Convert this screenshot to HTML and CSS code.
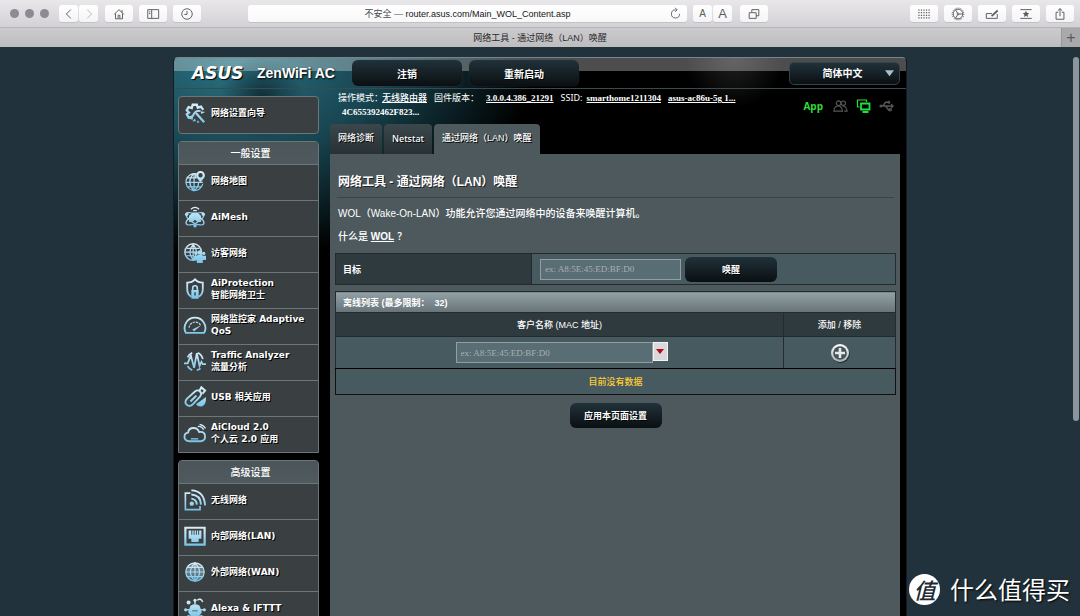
FILE: index.html
```
<!DOCTYPE html>
<html lang="zh-CN">
<head>
<meta charset="utf-8">
<title>网络工具 - 通过网络（LAN）唤醒</title>
<link rel="stylesheet" href="styles.css">
</head>
<body>
<svg class="defs" width="0" height="0" aria-hidden="true">
  <defs>
    <linearGradient id="ice" gradientUnits="userSpaceOnUse" x1="0" y1="0" x2="0" y2="24"><stop offset="0" stop-color="#e4f4fb"/><stop offset="1" stop-color="#6fc0e6"/></linearGradient>
    <linearGradient id="metal" x1="0" y1="0" x2="0" y2="1"><stop offset="0" stop-color="#ffffff"/><stop offset="1" stop-color="#a9adaf"/></linearGradient>
  </defs>
</svg>
<div class="browser">
  <header class="toolbar">
    <div class="lights"><i></i><i></i><i></i></div>
    <div class="pair">
      <button class="tool" aria-label="后退"><svg viewBox="0 0 16 16"><path d="M10 3 5 8l5 5"/></svg></button>
      <button class="tool off" aria-label="前进"><svg viewBox="0 0 16 16"><path d="m6 3 5 5-5 5"/></svg></button>
    </div>
    <div class="tools">
      <button class="tool wide" aria-label="主页"><svg viewBox="0 0 16 16"><path d="M2.500 8.500 8 3l5.500 5.500M4 7.500v6h8v-6M11.500 6.500V3.500M7 13v-3.500h2V13"/></svg></button>
      <button class="tool wide" aria-label="边栏"><svg viewBox="0 0 16 16"><path d="M2 3h12.500v10H2zM6.500 3v10M3.500 5.500h1.500M3.500 7.500h1.500"/></svg></button>
      <button class="tool wide" aria-label="历史记录"><svg viewBox="0 0 16 16"><circle cx="8" cy="8" r="6"/><path d="M8 4.500V8.500H5"/></svg></button>
    </div>
    <div class="address">
      <a href="#">不安全 — <b>router.asus.com/Main_WOL_Content.asp</b></a>
      <button class="reload" aria-label="重新载入"><svg viewBox="0 0 16 16"><path d="M13 8.500a5 5 0 1 1-5-5h1.500M7.500 1 10 3.500 7.500 6"/></svg></button>
    </div>
    <div class="pair">
      <button class="tool small-a">A</button>
      <button class="tool big-a">A</button>
    </div>
    <button class="tool wide" aria-label="窗口"><svg viewBox="0 0 16 16"><path d="M2.500 6.500h8v6.500h-8zM5.500 6V3h8v7h-3"/></svg></button>
    <div class="tools right">
      <button class="tool wide" aria-label="常用站点"><svg viewBox="0 0 16 16"><path class="dots" d="M1.500 3.500h13M1.500 6.500h13M1.500 9.500h13M1.500 12.500h13"/></svg></button>
      <button class="tool wide" aria-label="设置"><svg viewBox="0 0 16 16"><circle cx="8" cy="8" r="5.500"/><circle class="teeth" cx="8" cy="8" r="6.700"/><circle cx="8" cy="8" r="1"/><path d="M9 8h4.500M7.500 7 5.200 3.200M7.500 9l-2.300 3.800"/></svg></button>
      <button class="tool wide" aria-label="编辑"><svg viewBox="0 0 16 16"><path d="M8 7.500H1.500v5.500H14V8"/><path class="thick" d="M7.500 10.500 14.500 4"/></svg></button>
      <button class="tool wide" aria-label="书签"><svg viewBox="0 0 16 16"><path d="M1.500 3h13M1.500 13h13"/><path class="solid" d="m8 4.300 1.100 2.400 2.600.3-1.900 1.800.5 2.600L8 10.100l-2.300 1.300.5-2.600L4.300 7l2.600-.3z"/></svg></button>
      <button class="tool wide" aria-label="共享"><svg viewBox="0 0 16 16"><path d="M6 6H3.500v8h9V6H10M8 10.500V2M5.500 4.200 8 1.800l2.500 2.400"/></svg></button>
    </div>
  </header>
  <div class="tabbar"><span>网络工具 - 通过网络（LAN）唤醒</span><button aria-label="新标签页">+</button></div>

  <div class="viewport">
    <div class="frame">
      <div class="masthead">
        <span class="brand">ASUS</span>
        <span class="model">ZenWiFi AC</span>
        <button class="btn top">注销</button>
        <button class="btn top">重新启动</button>
        <div class="lang">
          <select aria-label="语言"><option>简体中文</option></select>
          <svg viewBox="0 0 10 8"><path d="M0 1h10L5 7.500z"/></svg>
        </div>
      </div>

      <div class="columns">
        <nav class="side">
          <ul class="menu round">
            <li><a href="#"><svg viewBox="0 0 24 24"><path d="M8.500 19v-3.200L5 17l-2-3.500 2.500-2L3 9l2-3.500 3.500 1.200L9.500 3H14l1 3.200L18.500 5 21 8.500" stroke-width="2.500"/><path d="M18 10a6 6 0 0 0-8 6" stroke-width="2"/><path d="m13 12 9 10" stroke-width="2.500"/><path class="fill" d="m9 21 3-3 1 3zM18 10l5 1-4 2zM15 20l2 2-3 1z"/></svg><span>网络设置向导</span></a></li>
          </ul>
          <section class="menu">
            <h2>一般设置</h2>
            <ul>
              <li><a href="#"><svg viewBox="0 0 24 24"><path d="M14 4.300A9.300 9.300 0 1 0 20.500 15M11 4v19M2 13.500h18.500M4 8.500h10M4 18.500h15M10 4.500q-8 9 1 18.200M13 5q-1 2 0 4M16 13q0 6-5 9.500"/><path class="fill" fill-rule="evenodd" d="M18 1a4.800 4.800 0 0 0-4.800 4.800c0 3 2.800 4.700 4.800 8.200 2-3.500 4.800-5.200 4.800-8.200A4.800 4.800 0 0 0 18 1zm0 2.300a2.400 2.400 0 1 1 0 4.800 2.400 2.400 0 0 1 0-4.800z"/></svg><span>网络地图</span></a></li>
              <li><a href="#"><svg viewBox="0 0 24 24"><path d="M7.500 3.500q4.500-4 9 0M10 5.500q2-1.500 4 0"/><path class="fill" d="m5.500 10.500 4-3.500h5l4 3.500v7h-4L12 15l-2.500 2.500h-4z"/><ellipse cx="12" cy="14" rx="11" ry="4.500" transform="rotate(30 12 14)"/><ellipse cx="12" cy="14" rx="11" ry="4.500" transform="rotate(-30 12 14)"/><circle class="fill" cx="12" cy="21.500" r="2"/><circle class="fill" cx="3" cy="9" r="1.800"/><circle class="fill" cx="21" cy="9" r="1.800"/></svg><span>AiMesh</span></a></li>
              <li><a href="#"><svg viewBox="0 0 24 24"><circle cx="10" cy="11" r="9" stroke-width="1.600"/><path d="M10 2.500v17M1.500 11h17M3 7h14M3 15h8M10 2.500q-7 8 0 17M10 2.500q7 8 0 17"/><circle class="fill" cx="13" cy="12.500" r="1.800"/><circle class="fill" cx="21.500" cy="12.500" r="1.800"/><circle class="fill" cx="17.300" cy="11.500" r="2.400"/><path class="fill" d="M11 15h3l1-1h4.600l1 1H24v4.500h-3.500V23H14v-3.500h-3z"/></svg><span>访客网络</span></a></li>
              <li><a href="#"><svg viewBox="0 0 24 24"><path d="M8 20.500q-4.500-2.500-4.500-8.500V5q5.500 0 8.500-3.500Q15 5 20.500 5v7q0 6-4.500 8.500" stroke-width="2"/><path d="M9.500 13v-2a2.500 2.500 0 0 1 5 0v2" stroke-width="1.800"/><path class="fill" fill-rule="evenodd" d="M8 13h8v9.500H8zm3.200 2.500v3.500h1.600v-3.500z"/></svg><span>AiProtection<br>智能网络卫士</span></a></li>
              <li><a href="#"><svg viewBox="0 0 24 24"><path d="M2 20.500a11.300 11.300 0 1 1 20 0z" stroke-width="2"/><path d="M5.500 15a6.800 6.800 0 0 1 12.500-3" stroke-dasharray="2.500 1"/><path class="fill" d="m9 17 10-5-8 7z"/></svg><span>网络监控家 Adaptive QoS</span></a></li>
              <li><a href="#"><svg viewBox="0 0 24 24"><path d="M0 14.500h4L7.500 6 11 19.500 14 3.500l3 14 2-4.500 1.500 2.500H24" stroke-width="1.900"/><path d="M4 17.500a9 9 0 0 0 5 4.500M15 3a10 10 0 0 1 5.500 7M4 8a9 9 0 0 1 5-5M14 22a9 9 0 0 0 4-2" stroke-width="2"/></svg><span>Traffic Analyzer<br>流量分析</span></a></li>
              <li><a href="#"><svg viewBox="0 0 24 24"><path d="m3 14 9-8q3-2.500 5.500 0t0 5.500l-8.500 9q-3 2.500-6 0T3 14z" stroke-width="2"/><path d="m7 17 6.500-6.500M17 5l2-3.500L23 5l-3 3.500" stroke-width="2.200"/><path class="fill" d="m13 20 11-8q.5 8-4 10-4 1.500-7-2z"/></svg><span>USB 相关应用</span></a></li>
              <li><a href="#"><svg viewBox="0 0 24 24"><path d="M6 21q-5.500-.5-5.500-5 0-4 4-4.500.5-5 6-5 4.500 0 6 4.500 6.500-1 6.500 5 0 4.500-5 5z" stroke-width="2"/><path d="M7.500 18.500h8M15 5q4-1 6.500 3.500M17 2.500q4 .500 6.500 4.500" stroke-width="1.400"/></svg><span>AiCloud 2.0<br>个人云 2.0 应用</span></a></li>
            </ul>
          </section>
          <section class="menu">
            <h2>高级设置</h2>
            <ul>
              <li><a href="#"><svg viewBox="0 0 24 24"><path d="M7 4.500H1.500v18h16v-4" stroke-width="1.800"/><circle class="fill" cx="8.500" cy="16" r="2.400"/><path d="M8 10.500q5.500.500 6 6.500M8 6q10 .5 10.500 11M8 1.500q14 .5 15 16.500" stroke-width="2.100"/></svg><span>无线网络</span></a></li>
              <li><a href="#"><svg viewBox="0 0 24 24"><path d="M1.500 3h21v18.500h-21z" stroke-width="2.400"/><path class="fill" fill-rule="evenodd" d="M5 6h14v9h-3v3.500H8V15H5zM8 6v4.500h1V6zm2.500 0v4.500h1V6zm2.500 0v4.500h1V6zm2.500 0v4.500h1V6z"/></svg><span>内部网络(LAN)</span></a></li>
              <li><a href="#"><svg viewBox="0 0 24 24"><circle class="fill dim" cx="12" cy="12" r="10.500"/><circle cx="12" cy="12" r="10"/><path d="M12 2v20M2 12h20M4 7h16M4 17h16M12 2q-10 10 0 20M12 2q10 10 0 20"/></svg><span>外部网络(WAN)</span></a></li>
              <li><a href="#"><svg viewBox="0 0 24 24"><path class="fill" fill-rule="evenodd" d="M7 9.500q5-3 10 0l2.500 7-3 4.500h-9l-3-4.500zM9 14h6v1.500H9z"/><circle class="fill" cx="5" cy="6" r="2.200"/><circle class="fill" cx="1.800" cy="14" r="1.800"/><circle class="fill" cx="22.200" cy="14" r="1.800"/><circle class="fill" cx="5" cy="21.500" r="1.800"/><circle class="fill" cx="19" cy="21.500" r="1.800"/><path d="M12 4v4M2 14h20M14.500 3.500q3.500-3 6 2" stroke-width="1.600"/><circle class="fill" cx="12" cy="3.500" r="1.700"/></svg><span>Alexa &amp; IFTTT</span></a></li>
            </ul>
          </section>
        </nav>

        <main class="main">
          <div class="status">
            <div class="info">
              <p><span>操作模式：</span><a href="#" class="cn">无线路由器</a><span>固件版本：</span><a href="#" class="fw">3.0.0.4.386_21291</a><span class="ssid">SSID:</span><a href="#">smarthome1211304</a><a href="#">asus-ac86u-5g 1...</a></p>
              <p class="mac">4C655392462F823...</p>
            </div>
            <div class="signals">
              <a href="#">App</a>
              <svg class="grey" viewBox="0 0 16 14"><circle cx="6" cy="4" r="2.500"/><circle cx="11" cy="4" r="2.300"/><path d="M1 12.500q0-5.500 5-5.500 2 0 3 2 1 1 1 3.500zM10 7q4.500 0 5 5.500h-3"/></svg>
              <svg class="green" viewBox="0 0 14 14"><path d="M3 8H1V1h9v2"/><path d="M4.500 4.500h8.500v6H4.500zM6 13h6" stroke-width="1.800"/></svg>
              <svg class="grey" viewBox="0 0 16 14"><path d="M1 7h14M13 5l2 2-2 2M4 7l3-4h3M7 7l3 4h2" stroke-width="1.400"/><circle cx="2" cy="7" r="1"/><circle cx="10.500" cy="3" r="1"/><path d="M11 10h2v2h-2z"/></svg>
            </div>
          </div>
          <nav class="tabs">
            <a href="#">网络诊断</a><a href="#">Netstat</a><a href="#" class="on">通过网络（LAN）唤醒</a>
          </nav>
          <div class="panel">
            <h1>网络工具 - 通过网络（LAN）唤醒</h1>
            <p>WOL（Wake-On-LAN）功能允许您通过网络中的设备来唤醒计算机。</p>
            <p>什么是 <a href="#">WOL</a> ？</p>
            <table class="grid target">
              <tr><th><label for="target">目标</label></th>
              <td><div class="row"><input id="target" type="text" placeholder="ex: A8:5E:45:ED:BF:D0"><button class="btn mid">唤醒</button></div></td></tr>
            </table>
            <table class="grid list">
              <thead>
                <tr class="cap"><th colspan="2">离线列表 (最多限制：&nbsp; 32)</th></tr>
                <tr class="names"><th><label for="client">客户名称 (MAC 地址)</label></th><th class="act">添加 / 移除</th></tr>
              </thead>
              <tbody>
                <tr class="entry"><td><div class="combo"><input id="client" type="text" placeholder="ex: A8:5E:45:ED:BF:D0"><button aria-label="选择客户端"><svg viewBox="0 0 8 5"><path d="M0 0h8L4 5z"/></svg></button></div></td>
                <td><button class="add" aria-label="添加"><svg viewBox="0 0 20 20"><circle cx="10.700" cy="11" r="9" fill="#222b2e"/><circle cx="10" cy="10" r="9" fill="url(#metal)"/><circle cx="10" cy="10" r="6.800" fill="#45535a"/><path d="M10 5v10M5 10h10" stroke="#e6e9ea" stroke-width="2.600"/></svg></button></td></tr>
                <tr class="none"><td colspan="2">目前没有数据</td></tr>
              </tbody>
            </table>
            <button class="btn mid apply">应用本页面设置</button>
          </div>
        </main>
      </div>
    </div>
    <div class="thumb"></div>
    <div class="watermark"><span class="seal">值</span><span>什么值得买</span></div>
  </div>
</div>
</body>
</html>
```
FILE: styles.css
```
* { box-sizing: border-box; }
body { margin: 0; font-family: "Liberation Sans", "Noto Sans CJK SC", sans-serif; font-size: 9px; color: #fff; }
button, input, select { font: inherit; color: inherit; margin: 0; padding: 0; border: 0; }
ul, h1, h2, p { margin: 0; padding: 0; list-style: none; }
a { color: inherit; }
svg { display: block; }
.defs { position: absolute; }

.browser { height: 100vh; display: flex; flex-direction: column; background: #22323c; }
.toolbar { height: 28px; display: flex; align-items: center; padding: 0 6px 0 10px; background: linear-gradient(#e9e7ea, #d3d1d5); border-bottom: 1px solid #b5b4b8; color: #5b5b5e; }
.lights { display: flex; gap: 6px; margin-right: 10px; }
.lights i { width: 9px; height: 9px; border-radius: 50%; background: #8c8b92; }
.pair { display: flex; gap: 1px; }
.tools { display: flex; gap: 6px; margin-left: 7px; }
.tools.right { margin-left: 142px; }
.tool { width: 19px; height: 17px; display: flex; align-items: center; justify-content: center; border-radius: 3px; background: linear-gradient(#fff, #f4f3f5); box-shadow: 0 1px 0 #c2c1c4; }
.tool.wide { width: 28px; }
.tool svg, .reload svg { width: 14px; height: 14px; fill: none; stroke: #5d5d60; stroke-width: 1.1; }
.tool.off svg { stroke: #b5b5b8; }
.tool .dots { stroke-width: 1.4; stroke-dasharray: 1.4 1.5; }
.tool .teeth { stroke-dasharray: 1.2 1.2; }
.tool .thick { stroke-width: 2; }
.tool .solid { fill: #5d5d60; stroke: none; }
.small-a { font-size: 10px; }
.big-a { font-size: 13px; }
.address { flex: 1; height: 17px; display: flex; align-items: center; margin: 0 6px 0 47px; padding-left: 18px; border-radius: 3px; background: linear-gradient(#fff, #f8f8f9); box-shadow: 0 1px 0 #c2c1c4; }
.address a { flex: 1; text-align: center; text-decoration: none; color: #4c4c4e; }
.address b { font-weight: 400; color: #161616; }
.reload { width: 18px; background: none; }
.reload svg { width: 13px; height: 13px; }
.pair + .wide { margin-left: 8px; }
.tabbar { height: 19px; display: flex; align-items: center; padding-left: 19px; background: linear-gradient(#cbcacd, #bdbcbf); color: #2b2b2d; }
.tabbar span { flex: 1; text-align: center; }
.tabbar button { width: 19px; height: 19px; background: #a9a8ab; color: #5a5a5c; font-size: 16px; line-height: 19px; border-left: 1px solid #98979a; }

.viewport { flex: 1; min-height: 0; position: relative; overflow: hidden; padding-top: 10px; }
.frame { max-width: 734px; min-height: 100%; margin: 0 auto; padding: 0 4px; border: 1px solid #141d23; border-top-color: #77868a; border-radius: 5px 5px 0 0;
  background:
    linear-gradient(#ffffff4d, #ffffff4d) 0 0 / 100% 13px no-repeat,
    radial-gradient(circle at 88px 40px, #06151baa, #06151b00 42px),
    radial-gradient(circle at 560px 0, #ffffff22, #ffffff00 50px),
    radial-gradient(ellipse 300px 200px at 60px 0, #2b7484, #17434e 50%, #00000000 100%) #000; }
.masthead { height: 31px; display: flex; align-items: center; margin: 0 -4px; padding: 0 6px 0 18px; border-bottom: 1px solid #3a4a50; }
.brand { width: 65px; font: italic bold 17px "DejaVu Sans", sans-serif; text-shadow: 1px 1px 1px #000; }
.model { width: 95px; font-size: 14px; font-weight: 700; text-shadow: 1px 1px 2px #000; }
.btn { background: linear-gradient(#21323a, #0a0f12); border-radius: 6px; font-weight: 700; text-shadow: 1px 1px 0 #000; box-shadow: 0 0 1px #55666c; }
.btn.top { width: 110px; height: 26px; margin-right: 7px; font-size: 10px; }
.lang { position: relative; margin-left: auto; width: 111px; }
.lang select { appearance: none; width: 100%; height: 23px; border: 1px solid #34434a; border-radius: 5px; padding-right: 4px; background: linear-gradient(#21323a, #0a0f12); font-size: 10px; font-weight: 700; text-align: center; text-align-last: center; }
.lang svg { position: absolute; right: 6px; top: 7px; width: 9px; height: 8px; fill: #a8c0cc; pointer-events: none; }

.columns { display: flex; align-items: flex-start; gap: 11px; padding-top: 7px; }
.side { width: 141px; flex: none; display: flex; flex-direction: column; gap: 7px; }
.menu { border: 1px solid #6c7578; border-radius: 4px 4px 0 0; background: #3a3f42; overflow: hidden; }
.menu.round { border-radius: 4px; }
.menu h2 { height: 22px; line-height: 24px; padding-left: 4px; font-size: 10px; font-weight: 500; text-align: center; background: linear-gradient(#4b565a, #505a5e); }
.menu li { height: 36px; border-top: 1px solid #6c7578; }
.menu.round li { border-top: 0; }
.menu a { height: 100%; display: flex; align-items: center; gap: 5px; padding: 0 4px 4px 5px; text-decoration: none; font-family: "DejaVu Sans", "Noto Sans CJK SC", sans-serif; font-weight: 700; line-height: 12px; text-shadow: 1px 1px 0 #000; }
.menu svg { flex: none; width: 22px; height: 22px; fill: none; stroke: url(#ice); stroke-width: 1.3; overflow: visible; }
.menu .fill { fill: url(#ice); stroke: none; }
.menu .dim { opacity: .4; }

.main { flex: 1; min-width: 0; padding-right: 2px; }
.status { height: 28px; display: flex; justify-content: space-between; padding: 0 6px 0 8px; }
.info { margin-top: -5px; }
.info p { display: flex; height: 14px; line-height: 14px; white-space: nowrap; align-items: center; }
.info p > * { margin-right: 7px; }
.info span:first-child { margin-right: -1px; }
.info .ssid { margin-right: 4px; font-family: "Noto Sans", sans-serif; }
.info a, .mac { font-family: "Liberation Serif", "Noto Sans CJK SC", serif; font-weight: 700; }
.info a.cn { font-weight: 500; }
.info .mac { padding-left: 4px; }
.signals { display: flex; align-items: center; gap: 8px; height: 19px; }
.signals a { color: #2fdc38; text-decoration: none; font: bold 10px "Open Sans", sans-serif; margin-right: 2px; }
.signals svg { width: 15px; height: 14px; fill: none; stroke-width: 1.2; }
.signals .grey { stroke: #56585a; }
.signals .green { stroke: #22e03a; }
.tabs { display: flex; gap: 2px; }
.tabs a { height: 30px; line-height: 29px; padding: 0 8px; border-radius: 4px 4px 0 0; background: linear-gradient(#3b474c, #283135); text-decoration: none; font-weight: 500; text-shadow: 1px 1px 0 #000; }
.tabs a.on { background: #4d595d; }
.tabs a:nth-child(2) { font-family: "Noto Sans", sans-serif; }
.panel { background: #4d595d; min-height: 640px; padding: 18px 4px 0 5px; }
h1 { font-size: 12px; line-height: 20px; margin: 0 2px 7px; padding: 0 1px 5px; border-bottom: 1px solid #36454c; text-shadow: 1px 1px 0 #222; }
.panel p { font-size: 10px; line-height: 18px; margin: 0 3px 5px; font-weight: 500; }
.panel p a { font-weight: 700; }
.grid { width: 100%; border-collapse: collapse; }
.grid th, .grid td { border: 1px solid #222b2e; padding: 0; }
.grid td { background: #475a60; }
.grid th { background: #2f3a3e; }
.target { margin-top: 7px; }
.target th { width: 35%; padding-left: 7px; text-align: left; }
.target td { height: 31px; padding-left: 8px; }
.row { display: flex; align-items: center; gap: 4px; }
.grid input { width: 141px; height: 21px; padding: 0 4px; background: #596d74; border: 1px solid #929ea1; font-family: "Liberation Serif", serif; font-size: 9px; }
.grid input::placeholder { color: #a9b0b0; opacity: 1; }
.btn.mid { width: 92px; height: 25px; }
.list { margin-top: 6px; }
.list .cap th { height: 21px; padding-left: 7px; text-align: left; background: linear-gradient(#93a0a5, #66747a); }
.list .names th { height: 24px; font-weight: 500; }
.list .act { width: 20%; }
.entry td { height: 32px; border-bottom-color: #000; }
.combo { display: flex; justify-content: center; padding-left: 4px; }
.combo input { width: 197px; }
.combo button { width: 15px; height: 19px; display: flex; align-items: center; justify-content: center; background: #d9d8da; border: 1px solid #f4f4f4; }
.combo svg { width: 8px; height: 5px; fill: #b00d18; }
.add { display: block; margin: 0 auto; background: none; }
.add svg { width: 20px; height: 20px; }
.none td { height: 26px; text-align: center; color: #fc3; font-weight: 500; border-color: #111; }
.apply { display: block; margin: 8px auto 0; }

.thumb { position: absolute; right: 1px; top: 10px; width: 6px; height: 64%; border-radius: 3px; background: #8b969c; }
.watermark { position: absolute; right: 10px; bottom: 11px; display: flex; align-items: center; gap: 10px; font-family: "Noto Sans CJK SC", sans-serif; font-size: 24px; line-height: 32px; text-shadow: 1px 1px 2px #000; }
.seal { width: 31px; height: 31px; border-radius: 50%; background: #fff; color: #1c2b34; font-size: 22px; font-style: italic; font-weight: 500; text-align: center; line-height: 30px; text-shadow: none; }
```
